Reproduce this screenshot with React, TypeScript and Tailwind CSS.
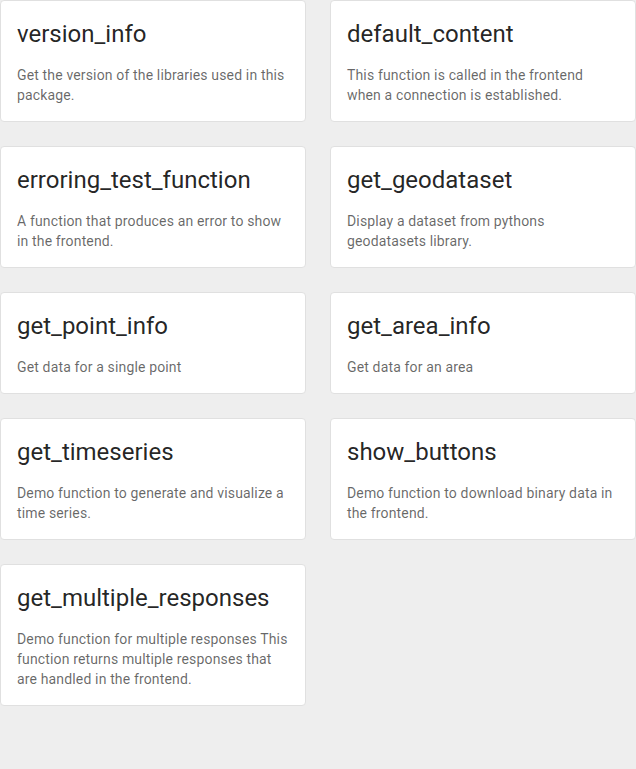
import React from "react";

const items: { title: string; desc: string }[] = [
  { title: "version_info", desc: "Get the version of the libraries used in this package." },
  { title: "default_content", desc: "This function is called in the frontend when a connection is established." },
  { title: "erroring_test_function", desc: "A function that produces an error to show in the frontend." },
  { title: "get_geodataset", desc: "Display a dataset from pythons geodatasets library." },
  { title: "get_point_info", desc: "Get data for a single point" },
  { title: "get_area_info", desc: "Get data for an area" },
  { title: "get_timeseries", desc: "Demo function to generate and visualize a time series." },
  { title: "show_buttons", desc: "Demo function to download binary data in the frontend." },
  {
    title: "get_multiple_responses",
    desc: "Demo function for multiple responses This function returns multiple responses that are handled in the frontend.",
  },
];

export default function App() {
  return (
    <div
      className="min-h-[769px] w-[636px] bg-[#eeeeee]"
      style={{ fontFamily: "Roboto, 'Noto Sans', sans-serif" }}
    >
      <div className="grid grid-cols-2 gap-x-6 gap-y-6 items-start">
        {items.map((it) => (
          <div
            key={it.title}
            className="bg-white border border-[#e0e0e0] rounded-[4px] px-4 pt-[17px] pb-4"
          >
            <div className="text-[24px] leading-[32px] font-normal text-[rgba(0,0,0,0.87)]">
              {it.title}
            </div>
            <div className="mt-[15px] text-[14px] leading-[20px] tracking-[0.15px] text-[rgba(0,0,0,0.6)]">
              {it.desc}
            </div>
          </div>
        ))}
      </div>
    </div>
  );
}
